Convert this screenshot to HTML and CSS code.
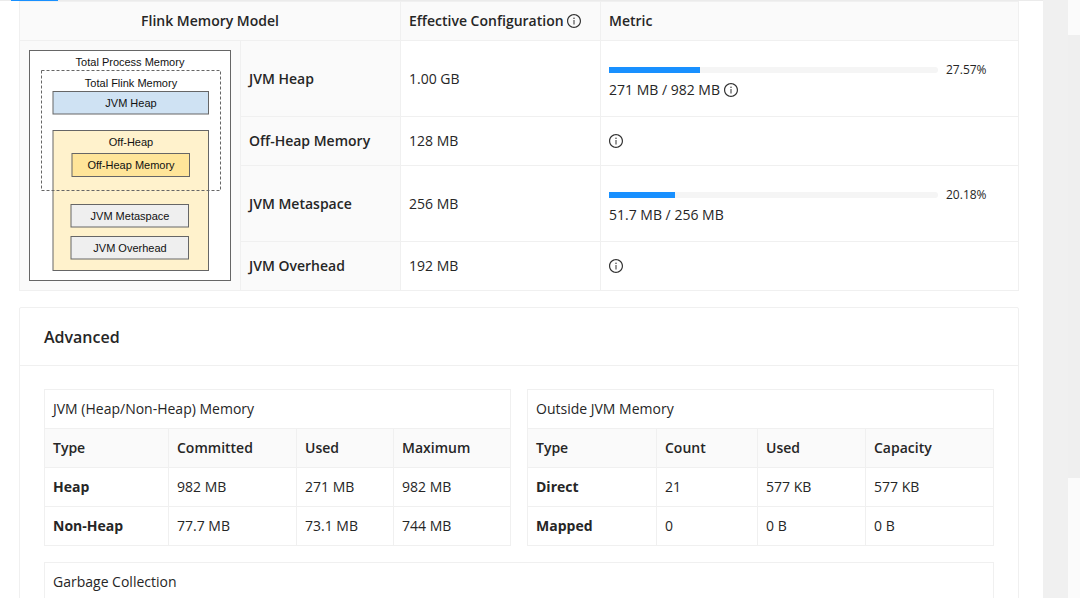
FILE: index.html
```html
<!DOCTYPE html>
<html lang="en">
<head>
<meta charset="utf-8">
<title>Flink Memory Model</title>
<link rel="stylesheet" href="styles.css">
</head>
<body>
<svg class="defs" aria-hidden="true">
  <symbol id="info" viewBox="64 64 896 896">
    <path d="M512 64C264.600 64 64 264.600 64 512s200.600 448 448 448 448-200.600 448-448S759.400 64 512 64zm0 820c-205.400 0-372-166.600-372-372s166.600-372 372-372 372 166.600 372 372-166.600 372-372 372z"/>
    <path d="M464 336a48 48 0 1 0 96 0 48 48 0 1 0-96 0zm72 112h-48c-4.400 0-8 3.600-8 8v272c0 4.400 3.600 8 8 8h48c4.400 0 8-3.600 8-8V456c0-4.400-3.600-8-8-8z"/>
  </symbol>
</svg>
<div class="page">
  <main class="content">
    <div class="tabs"><div class="tab-ink"></div></div>
    <div class="body">
      <table class="table model">
        <colgroup><col class="w-diagram"><col class="w-label"><col class="w-config"><col></colgroup>
        <thead>
          <tr>
            <th class="center" colspan="2">Flink Memory Model</th>
            <th>Effective Configuration <svg class="icon"><use href="#info"/></svg></th>
            <th>Metric</th>
          </tr>
        </thead>
        <tbody>
          <tr>
            <td class="shade" rowspan="4">
              <svg class="diagram" viewBox="0 0 203 231" role="img" aria-label="Flink memory model diagram">
                <rect class="box white" x="1.5" y="0.5" width="201" height="230"/>
                <rect class="box yellow" x="25" y="80.500" width="155.500" height="140"/>
                <rect class="box blue" x="25" y="41.500" width="155.500" height="22.500"/>
                <rect class="box amber" x="44" y="103.500" width="117.500" height="23"/>
                <rect class="box grey" x="43" y="154.500" width="117.500" height="22.500"/>
                <rect class="box grey" x="43" y="186.500" width="117.500" height="22.500"/>
                <rect class="dashed" x="13.500" y="20.500" width="179" height="120"/>
                <text x="102" y="16">Total Process Memory</text>
                <text x="103" y="37">Total Flink Memory</text>
                <text x="103" y="57">JVM Heap</text>
                <text x="103" y="96">Off-Heap</text>
                <text x="103" y="119">Off-Heap Memory</text>
                <text x="102" y="170">JVM Metaspace</text>
                <text x="102" y="202">JVM Overhead</text>
              </svg>
            </td>
            <th>JVM Heap</th>
            <td>1.00 GB</td>
            <td class="usage">
              <div class="progress"><div class="track"><div class="fill" style="width:27.57%"></div></div><span class="percent">27.57%</span></div>
              <div class="amount">271 MB / 982 MB <svg class="icon"><use href="#info"/></svg></div>
            </td>
          </tr>
          <tr class="short">
            <th>Off-Heap Memory</th>
            <td>128 MB</td>
            <td><svg class="icon"><use href="#info"/></svg></td>
          </tr>
          <tr>
            <th>JVM Metaspace</th>
            <td>256 MB</td>
            <td class="usage">
              <div class="progress"><div class="track"><div class="fill" style="width:20.18%"></div></div><span class="percent">20.18%</span></div>
              <div class="amount">51.7 MB / 256 MB</div>
            </td>
          </tr>
          <tr class="short">
            <th>JVM Overhead</th>
            <td>192 MB</td>
            <td><svg class="icon"><use href="#info"/></svg></td>
          </tr>
        </tbody>
      </table>

      <section class="card">
        <h2 class="card-title">Advanced</h2>
        <div class="card-body">
          <div class="pair">
            <div class="panel">
              <div class="panel-title">JVM (Heap/Non-Heap) Memory</div>
              <table class="table">
                <colgroup><col class="w-124"><col class="w-128"><col class="w-97"><col></colgroup>
                <thead><tr><th>Type</th><th>Committed</th><th>Used</th><th>Maximum</th></tr></thead>
                <tbody>
                  <tr><td><strong>Heap</strong></td><td>982 MB</td><td>271 MB</td><td>982 MB</td></tr>
                  <tr><td><strong>Non-Heap</strong></td><td>77.7 MB</td><td>73.1 MB</td><td>744 MB</td></tr>
                </tbody>
              </table>
            </div>
            <div class="panel">
              <div class="panel-title">Outside JVM Memory</div>
              <table class="table">
                <colgroup><col class="w-129"><col class="w-101"><col class="w-108"><col></colgroup>
                <thead><tr><th>Type</th><th>Count</th><th>Used</th><th>Capacity</th></tr></thead>
                <tbody>
                  <tr><td><strong>Direct</strong></td><td>21</td><td>577 KB</td><td>577 KB</td></tr>
                  <tr><td><strong>Mapped</strong></td><td>0</td><td>0 B</td><td>0 B</td></tr>
                </tbody>
              </table>
            </div>
          </div>
          <div class="panel">
            <div class="panel-title">Garbage Collection</div>
          </div>
        </div>
      </section>
    </div>
  </main>
  <div class="scrollbar"><div class="thumb"></div></div>
</div>
</body>
</html>
```
FILE: styles.css
```css
* { box-sizing: border-box; }

body {
  margin: 0;
  background: #f0f0f0;
  color: #262626;
  font: 14px/22px "Open Sans", "Noto Sans", sans-serif;
}

.defs { position: absolute; width: 0; height: 0; }

.page {
  display: flex;
  height: 100vh;
  overflow: hidden;
}

.content {
  flex: 1;
  min-width: 0;
  margin-right: 25px;
  background: #fff;
}

.tabs {
  height: 1px;
  padding-left: 11px;
  background: #ebebeb;
}
.tab-ink { width: 47px; height: 1px; background: #1890ff; }

.body { padding: 0 24px 24px 19px; }

.table {
  width: 100%;
  table-layout: fixed;
  border-collapse: separate;
  border-spacing: 0;
}
.table th,
.table td {
  height: 39px;
  padding: 8px;
  border-right: 1px solid #f0f0f0;
  border-bottom: 1px solid #f0f0f0;
  text-align: left;
  vertical-align: middle;
}
.table th { background: #fafafa; font-weight: 600; }
.table .center { text-align: center; }
.table .shade { background: #fafafa; }
.table strong { font-weight: 700; }

.model { border-top: 1px solid #f0f0f0; border-left: 1px solid #f0f0f0; }
.model .short > * { height: 49px; }
.model .usage { padding: 19px 8px 16px; }

.w-diagram { width: 221px; }
.w-label { width: 160px; }
.w-config { width: 200px; }
.w-97 { width: 97px; }
.w-101 { width: 101px; }
.w-108 { width: 108px; }
.w-124 { width: 124px; }
.w-128 { width: 128px; }
.w-129 { width: 129px; }

.icon {
  width: 14px;
  height: 14px;
  fill: #333;
  vertical-align: -2px;
}
td > .icon { display: block; }

.progress {
  display: flex;
  align-items: center;
  gap: 8px;
  height: 20px;
}
.track { flex: 1; height: 6px; background: #f5f5f5; border-radius: 0 3px 3px 0; }
.fill { height: 6px; background: #1890ff; }
.percent { width: 64px; font-size: 12px; line-height: 20px; }
.amount { line-height: 20px; }

.diagram { display: block; width: 203px; height: 231px; }
.diagram text {
  font: 11px "Liberation Sans", Arial, sans-serif;
  text-anchor: middle;
  fill: #111;
}
.box { stroke: #666; }
.white { fill: #fff; }
.yellow { fill: #fff2cc; }
.blue { fill: #cfe2f3; }
.amber { fill: #ffe599; }
.grey { fill: #efefef; }
.dashed { fill: none; stroke: #666; stroke-dasharray: 3 2; }

.card {
  margin-top: 16px;
  border: 1px solid #f0f0f0;
  border-radius: 2px;
}
.card-title {
  margin: 0;
  padding: 18px 24px 17px;
  border-bottom: 1px solid #f0f0f0;
  font-size: 16px;
  font-weight: 600;
  line-height: 22px;
}
.card-body { padding: 23px 24px; }
.pair {
  display: grid;
  grid-template-columns: 1fr 1fr;
  gap: 16px;
  margin-bottom: 16px;
}
.panel {
  min-width: 0;
  border: 1px solid #f0f0f0;
  border-bottom: 0;
}
.panel .table tr > :last-child { border-right: 0; }
.panel-title {
  padding: 8px;
  border-bottom: 1px solid #f0f0f0;
}

.scrollbar {
  width: 12px;
  padding-top: 35px;
  background: #fbfbfb;
}
.thumb { height: 443px; background: #efefef; }
```
